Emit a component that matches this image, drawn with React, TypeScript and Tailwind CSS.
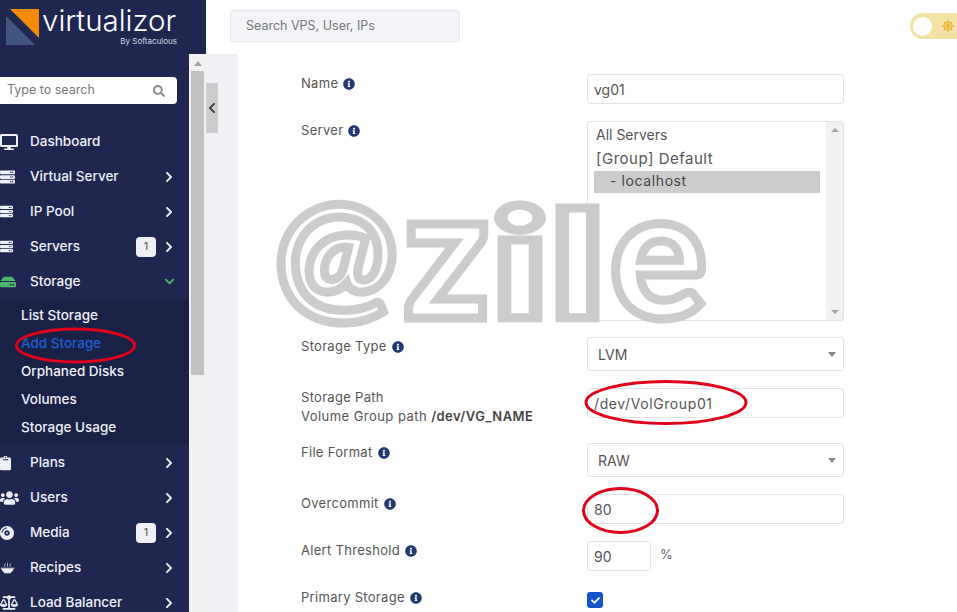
import { ReactNode } from "react";
import { FaBalanceScale, FaChevronDown, FaChevronLeft, FaChevronRight, FaClipboard, FaCompactDisc, FaDesktop, FaHdd, FaInfoCircle, FaServer, FaSun, FaUsers, FaCheck, FaSearch } from "react-icons/fa";

const RecipeIcon = () => (
  <svg viewBox="0 0 20 20" className="h-[20px] w-[20px] fill-current">
    <path d="M2 11h16c0 2.5-1.6 4-3.5 4.5V17h-9v-1.5C3.6 15 2 13.500 2 11zM1 9.500h18v1H1zM7 3c1 1.500-1 2.500 0 5H6C5 5.500 7 4.500 7 3zm3.500-1c1 1.500-1 3 0 6h-1c-1-3 1-4.500 1-6zM14 3c1 1.500-1 2.500 0 5h-1c-1-2.500 1-3.500 1-5z" />
  </svg>
);

const mainTop = [
  { label: "Dashboard", icon: <FaDesktop size={20} />, iconPad: "pr-[12px]", noArrow: true },
  { label: "Virtual Server", icon: <FaServer size={18} />, iconPad: "pr-[15px]" },
  { label: "IP Pool", icon: <FaServer size={17} />, iconPad: "pr-[17px]" },
  { label: "Servers", icon: <FaServer size={17} />, iconPad: "pr-[17px]", badge: "1" },
];

const subItems = ["List Storage", "Add Storage", "Orphaned Disks", "Volumes", "Storage Usage"];

const mainBottom = [
  { label: "Plans", icon: <FaClipboard size={18} />, iconPad: "pr-[19px]" },
  { label: "Users", icon: <FaUsers size={20} />, iconPad: "pr-[11px]" },
  { label: "Media", icon: <FaCompactDisc size={18} />, iconPad: "pr-[16px]", badge: "1" },
  { label: "Recipes", icon: <RecipeIcon />, iconPad: "pr-[15px]" },
  { label: "Load Balancer", icon: <FaBalanceScale size={19} />, iconPad: "pr-[12px]" },
];

const NavRow = ({ label, icon, iconPad, badge, noArrow }: { label: string; icon: ReactNode; iconPad: string; badge?: string; noArrow?: boolean }) => (
  <div className="flex h-[35px] items-center pr-[14px] text-[#eef0f8]">
    <span className={`flex w-[30px] shrink-0 justify-end ${iconPad}`}>{icon}</span>
    <span className="flex-1 text-[13.5px] font-medium">{label}</span>
    {badge && (
      <span className="mr-[7px] flex h-[20px] w-[20px] items-center justify-center rounded-[4px] bg-[#eef0f6] text-[11px] text-[#555]">{badge}</span>
    )}
    {!noArrow && <FaChevronRight size={12} />}
  </div>
);

const Label = ({ children }: { children: ReactNode }) => (
  <span className="flex items-center gap-[5px]">
    {children}
    <FaInfoCircle size={12} className="text-[#23396f]" />
  </span>
);

const Field = ({ label, children, className = "mb-[17px]" }: { label: ReactNode; children: ReactNode; className?: string }) => (
  <div className={`flex ${className}`}>
    <div className="w-[286px] shrink-0 text-[13px] leading-[19px] tracking-[0.3px] text-[#555]">{label}</div>
    {children}
  </div>
);

const TextInput = ({ value, className = "w-[257px]" }: { value: string; className?: string }) => (
  <input
    readOnly
    value={value}
    className={`h-[30px] rounded-[3px] border border-[#e2e2e6] bg-white px-[6px] text-[14px] text-[#555] outline-none ${className}`}
  />
);

const SelectBox = ({ value }: { value: string }) => (
  <div className="relative h-[34px] w-[257px]">
    <select className="h-full w-full appearance-none rounded-[3px] border border-[#e2e2e6] bg-white pl-[10px] text-[14px] text-[#555] outline-none">
      <option>{value}</option>
    </select>
    <span className="absolute right-[8px] top-[15px] h-0 w-0 border-x-[4px] border-t-[5px] border-x-transparent border-t-[#888]" />
  </div>
);

export default function App() {
  return (
    <div className="relative flex h-[612px] w-[957px] overflow-hidden bg-white font-['Inter',sans-serif]">
      {/* Left column */}
      <div className="flex w-[206px] shrink-0 flex-col">
        <div className="flex h-[54px] w-full bg-[#1f2750]">
          <div className="relative flex w-[177px] items-start pl-[6px] pt-[8px]">
            <svg viewBox="0 0 34 38" className="h-[38px] w-[34px] shrink-0">
              <polygon points="0,8 29,37 0,37" fill="#42557f" />
              <polygon points="4,1 33,1 33,30" fill="#f58a07" />
            </svg>
            <span className="ml-[2px] mt-[-8px] text-[29.5px] font-light leading-[40px] text-white">virtualizor</span>
            <span className="absolute right-0 top-[35px] text-[8px] text-[#d5d9e8]">By Softaculous</span>
          </div>
        </div>
        <div className="flex h-[558px]">
          <nav className="w-[189px] overflow-hidden bg-[#1f2750]">
            <div className="ml-[-8px] mt-[23px] flex h-[27px] w-[185px] items-center justify-between rounded-[4px] bg-white pl-[15px] pr-[12px]">
              <span className="text-[12.5px] text-[#777]">Type to search</span>
              <FaSearch size={12} className="text-[#8a8a8a]" />
            </div>
            <div className="mt-[20px]">
              {mainTop.map((item) => (
                <NavRow key={item.label} {...item} />
              ))}
              <div className="flex h-[35px] items-center pr-[14px] text-[#eef0f8]">
                <span className="flex w-[30px] shrink-0 justify-end pr-[14px] text-[#4fb56e]">
                  <FaHdd size={18} />
                </span>
                <span className="flex-1 text-[13.5px] font-medium">Storage</span>
                <FaChevronDown size={11} className="text-[#4fb56e]" />
              </div>
              <div className="bg-[#1a2147] pb-[4px] pt-[2px]">
                {subItems.map((item) => (
                  <div
                    key={item}
                    className={`flex h-[28px] items-center pl-[21px] text-[13.5px] font-medium ${item === "Add Storage" ? "text-[#1d5fd0]" : "text-[#eef0f8]"}`}
                  >
                    {item}
                  </div>
                ))}
              </div>
              {mainBottom.map((item) => (
                <NavRow key={item.label} {...item} />
              ))}
            </div>
          </nav>
          {/* Sidebar scrollbar */}
          <div className="flex w-[17px] flex-col items-center bg-[#f1f1f1] pt-[7px]">
            <span className="h-0 w-0 border-x-[4px] border-b-[5px] border-x-transparent border-b-[#a3a3a3]" />
            <div className="mt-[5px] h-[304px] w-[13px] bg-[#c1c1c1]" />
          </div>
        </div>
      </div>

      <div className="flex min-w-0 flex-1 flex-col">
        {/* Top bar */}
        <header className="flex h-[54px] shrink-0 items-center justify-between pl-[24px]">
          <div className="mt-[-2px] flex h-[32px] w-[230px] items-center rounded-[3px] border border-[#e6e8ef] bg-[#f3f4f8] pl-[15px] text-[12.500px] text-[#777]">
            Search VPS, User, IPs
          </div>
          <div className="mt-[-2px] flex h-[26px] w-[47px] items-center justify-between rounded-l-full bg-[#f3e2a6] pl-[3px] pr-[3px]">
            <span className="h-[19px] w-[19px] rounded-full bg-white" />
            <FaSun size={12} className="text-[#eeb035]" />
          </div>
        </header>

        <div className="flex min-h-0 flex-1">
          {/* Collapse strip */}
          <div className="w-[32px] shrink-0 bg-[#f0f1f5] pt-[29px]">
            <div className="flex h-[50px] w-[12px] items-center justify-center bg-[#cccccc] text-[#3d3d3d]">
              <FaChevronLeft size={12} />
            </div>
          </div>

          {/* Form */}
          <main className="flex-1 pl-[63px] pt-[20px]">
            <Field label={<Label>Name</Label>}>
              <TextInput value="vg01" />
            </Field>

            <Field label={<Label>Server</Label>} className="mb-[16px]">
              <div className="flex h-[200px] w-[257px] overflow-hidden rounded-[3px] border border-[#e2e2e6] bg-white">
                <div className="flex-1 pl-[6px] pt-[2px] text-[#555]">
                  <div className="pl-[2px] text-[14px] leading-[21px]">All Servers</div>
                  <div className="pl-[2px] pt-[2px] text-[15px] leading-[24px] tracking-[0.5px]">[Group] Default</div>
                  <div className="h-[22px] w-[226px] bg-[#cccccc] pl-[16px] text-[14px] leading-[20px] tracking-[0.6px] text-[#444]">- localhost</div>
                </div>
                <div className="flex w-[17px] flex-col items-center justify-between bg-[#f1f1f1] py-[6px]">
                  <span className="h-0 w-0 border-x-[4px] border-b-[4px] border-x-transparent border-b-[#a3a3a3]" />
                  <span className="h-0 w-0 border-x-[4px] border-t-[4px] border-x-transparent border-t-[#a3a3a3]" />
                </div>
              </div>
            </Field>

            <Field label={<Label>Storage Type</Label>}>
              <SelectBox value="LVM" />
            </Field>

            <Field
              label={
                <>
                  <div>Storage Path</div>
                  <div className="tracking-[0.45px]">
                    Volume Group path <b className="font-semibold text-[#444]">/dev/VG_NAME</b>
                  </div>
                </>
              }
            >
              <TextInput value="/dev/VolGroup01" className="w-[257px] tracking-[0.6px]" />
            </Field>

            <Field label={<Label>File Format</Label>}>
              <SelectBox value="RAW" />
            </Field>

            <Field label={<Label>Overcommit</Label>}>
              <TextInput value="80" />
            </Field>

            <Field label={<Label>Alert Threshold</Label>}>
              <div className="flex items-start">
                <TextInput value="90" className="w-[64px]" />
                <span className="ml-[9px] mt-[4px] text-[13px] text-[#666]">%</span>
              </div>
            </Field>

            <Field label={<Label>Primary Storage</Label>}>
              <span className="mt-[4px] flex h-[16px] w-[16px] items-center justify-center rounded-[3px] bg-[#1652c8] text-white">
                <FaCheck size={9} />
              </span>
            </Field>
          </main>
        </div>
      </div>

      {/* Watermark */}
      <div className="pointer-events-none absolute left-[275px] top-[147px] flex items-baseline font-['Lato',sans-serif] font-black leading-[200px] text-transparent [-webkit-text-stroke:9px_#cccccc]">
        <span className="flex w-[122px] -translate-y-[12px] justify-center text-[145px]">@</span>
        <span className="ml-[3px] flex w-[93px] justify-center text-[184px]">z</span>
        <span className="ml-[4px] flex w-[46px] scale-x-150 justify-center text-[150px]">i</span>
        <span className="ml-[12px] flex w-[45px] scale-x-150 justify-center text-[147px]">l</span>
        <span className="ml-[10px] flex w-[97px] justify-center text-[180px]">e</span>
      </div>

      {/* Hand-drawn red marks */}
      <svg className="pointer-events-none absolute inset-0 h-full w-full" viewBox="0 0 957 612" fill="none" stroke="#e0001a" strokeWidth="3">
        <ellipse cx="75.500" cy="345.500" rx="59" ry="16.500" />
        <ellipse cx="666" cy="402.500" rx="80" ry="21" />
        <ellipse cx="620.500" cy="510.500" rx="37" ry="22" />
      </svg>
    </div>
  );
}
